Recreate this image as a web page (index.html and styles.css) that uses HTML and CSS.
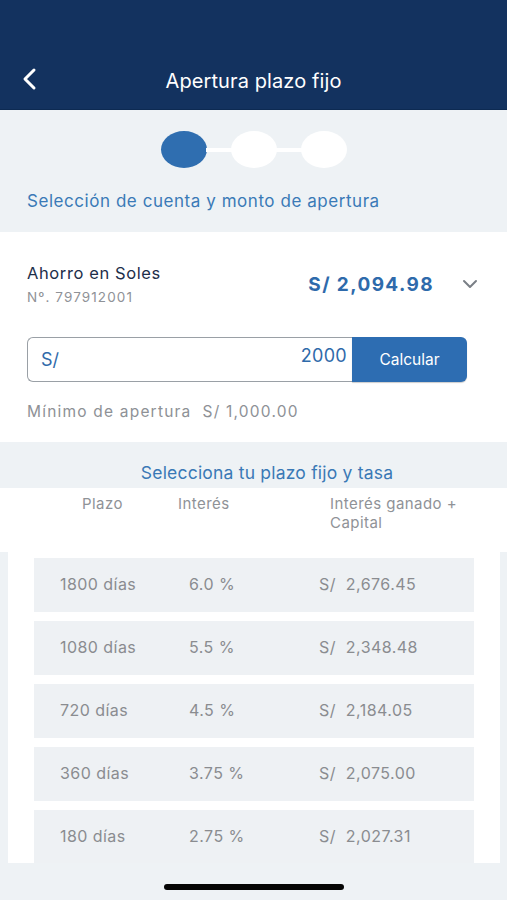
FILE: index.html
```html
<!DOCTYPE html>
<html lang="es">
<head>
<meta charset="utf-8">
<title>Apertura plazo fijo</title>
<link rel="stylesheet" href="styles.css">
</head>
<body>
<div class="screen">
  <header class="topbar">
    <div class="nav">
      <svg class="back" width="18" height="24" viewBox="0 0 18 24"><path d="M14 3 L5 12 L14 21" fill="none" stroke="#fff" stroke-width="3" stroke-linecap="round" stroke-linejoin="round"/></svg>
      <h1 class="title">Apertura plazo fijo</h1>
    </div>
  </header>

  <section class="steps">
    <div class="stepper">
      <span class="dot active"></span>
      <span class="line"></span>
      <span class="dot"></span>
      <span class="line"></span>
      <span class="dot"></span>
    </div>
    <p class="step-label">Selección de cuenta y monto de apertura</p>
  </section>

  <section class="card">
    <div class="account">
      <div class="acc-info">
        <div class="acc-name">Ahorro en Soles</div>
        <div class="acc-num">Nº. 797912001</div>
      </div>
      <div class="acc-balance">S/ 2,094.98</div>
      <svg class="chev" width="16" height="10" viewBox="0 0 16 10"><path d="M2 2 L8 8 L14 2" fill="none" stroke="#7a7f86" stroke-width="2" stroke-linecap="round" stroke-linejoin="round"/></svg>
    </div>
    <div class="amount">
      <div class="field">
        <span class="cur">S/</span>
        <span class="val">2000</span>
      </div>
      <button class="calc">Calcular</button>
    </div>
    <p class="min">Mínimo de apertura&nbsp; S/ 1,000.00</p>
  </section>

  <section class="select-title">Selecciona tu plazo fijo y tasa</section>

  <div class="heads">
    <span class="h-plazo">Plazo</span>
    <span class="h-int">Interés</span>
    <span class="h-cap">Interés ganado +<br>Capital</span>
  </div>

  <div class="list-wrap">
    <div class="list">
      <div class="row"><span class="c1">1800 días</span><span class="c2">6.0 %</span><span class="c3">S/&nbsp; 2,676.45</span></div>
      <div class="row"><span class="c1">1080 días</span><span class="c2">5.5 %</span><span class="c3">S/&nbsp; 2,348.48</span></div>
      <div class="row"><span class="c1">720 días</span><span class="c2">4.5 %</span><span class="c3">S/&nbsp; 2,184.05</span></div>
      <div class="row"><span class="c1">360 días</span><span class="c2">3.75 %</span><span class="c3">S/&nbsp; 2,075.00</span></div>
      <div class="row"><span class="c1">180 días</span><span class="c2">2.75 %</span><span class="c3">S/&nbsp; 2,027.31</span></div>
    </div>
  </div>

  <div class="home"><span class="home-bar"></span></div>
</div>
</body>
</html>
```

FILE: styles.css
```css
* { box-sizing: border-box; }
html, body { margin: 0; padding: 0; }
body {
  background: #eef2f5;
  font-family: Inter, "Liberation Sans", Arial, sans-serif;
  width: 507px;
  height: 900px;
  overflow: hidden;
}
.screen { width: 507px; height: 900px; display: flex; flex-direction: column; }

.topbar {
  height: 110px;
  background: #13325f;
  display: flex;
  align-items: flex-end;
  border-bottom: 1px solid #0d2a52;
}
.nav {
  position: relative;
  height: 60px;
  width: 100%;
  display: flex;
  align-items: center;
  justify-content: center;
  padding-top: 4px;
}
.back { position: absolute; left: 20px; top: 18px; }
.title {
  margin: 0;
  color: #fff;
  font-weight: 400;
  font-size: 20px;
  letter-spacing: 0.1px;
}

.steps {
  height: 122px;
  display: flex;
  flex-direction: column;
  align-items: flex-start;
  padding-top: 21px;
}
.stepper {
  align-self: center;
  display: flex;
  align-items: center;
  height: 37px;
}
.dot {
  width: 46px;
  height: 37px;
  border-radius: 50%;
  background: #fff;
}
.dot.active { background: #2f6eb0; }
.line { width: 26px; height: 4px; background: #fff; margin: 0 -1px; }
.step-label {
  margin: 23px 0 0 27px;
  color: #3a7ab7;
  font-size: 17px;
  letter-spacing: 0.55px;
}

.card {
  background: #fff;
  height: 210px;
  padding: 27px 0 0 27px;
}
.account { display: flex; align-items: center; height: 50px; }
.acc-info { flex: 1; }
.acc-name { color: #1d2e4a; font-size: 16.5px; letter-spacing: 0.6px; }
.acc-num { color: #8f9297; font-size: 13.5px; margin-top: 6px; letter-spacing: 1.1px; }
.acc-balance {
  color: #2e6aab;
  font-weight: 700;
  font-size: 19px;
  letter-spacing: 1.4px;
  margin-right: 28px;
  margin-top: 0;
}
.chev { margin-right: 29px; margin-top: 0; }

.amount { display: flex; margin-top: 28px; width: 440px; height: 45px; }
.field {
  flex: 1;
  border: 1px solid #9aa0a6;
  border-right: none;
  border-radius: 6px 0 0 6px;
  display: flex;
  justify-content: space-between;
  padding: 0 5px 0 13px;
}
.cur { color: #2f6aaa; font-size: 18px; margin-top: 11px; }
.val { color: #2f6aaa; font-size: 18px; margin-top: 7px; letter-spacing: 0.3px; }
.calc {
  width: 115px;
  border: none;
  border-radius: 0 6px 6px 0;
  background: #2d6db2;
  color: #fff;
  font-family: inherit;
  font-size: 15.5px;
  padding: 0;
  box-shadow: 0 1px 1px rgba(0,0,0,0.2);
}
.min { margin: 20px 0 0; color: #8e9196; font-size: 15.5px; letter-spacing: 1.2px; }

.select-title {
  height: 46px;
  text-align: center;
  color: #3a79b6;
  font-size: 17.5px;
  letter-spacing: 0.2px;
  padding: 20px 0 0 27px;
}

.heads {
  background: #fff;
  height: 64px;
  display: grid;
  grid-template-columns: 82px 96px 152px 1fr;
  color: #8f9297;
  font-size: 15px;
  line-height: 19px;
  padding-top: 6px;
  letter-spacing: 0.45px;
}
.h-plazo { grid-column: 2; }
.h-int { grid-column: 3; }
.h-cap { grid-column: 4; }

.list-wrap {
  height: 311px;
  padding: 0 7px 0 8px;
}
.list {
  background: #fff;
  height: 311px;
  overflow: hidden;
  padding: 6px 26px 0;
  display: flex;
  flex-direction: column;
  gap: 9px;
}
.row {
  flex: none;
  height: 54px;
  background: #eef1f4;
  display: grid;
  grid-template-columns: 129px 130px 1fr;
  align-items: center;
  padding-left: 26px;
  padding-bottom: 2px;
  color: #8a8c90;
  font-size: 16px;
  letter-spacing: 0.45px;
}

.home {
  flex: 1;
  display: flex;
  justify-content: center;
  padding-top: 21px;
}
.home-bar {
  width: 180px;
  height: 6px;
  border-radius: 3px;
  background: #050505;
}
```
